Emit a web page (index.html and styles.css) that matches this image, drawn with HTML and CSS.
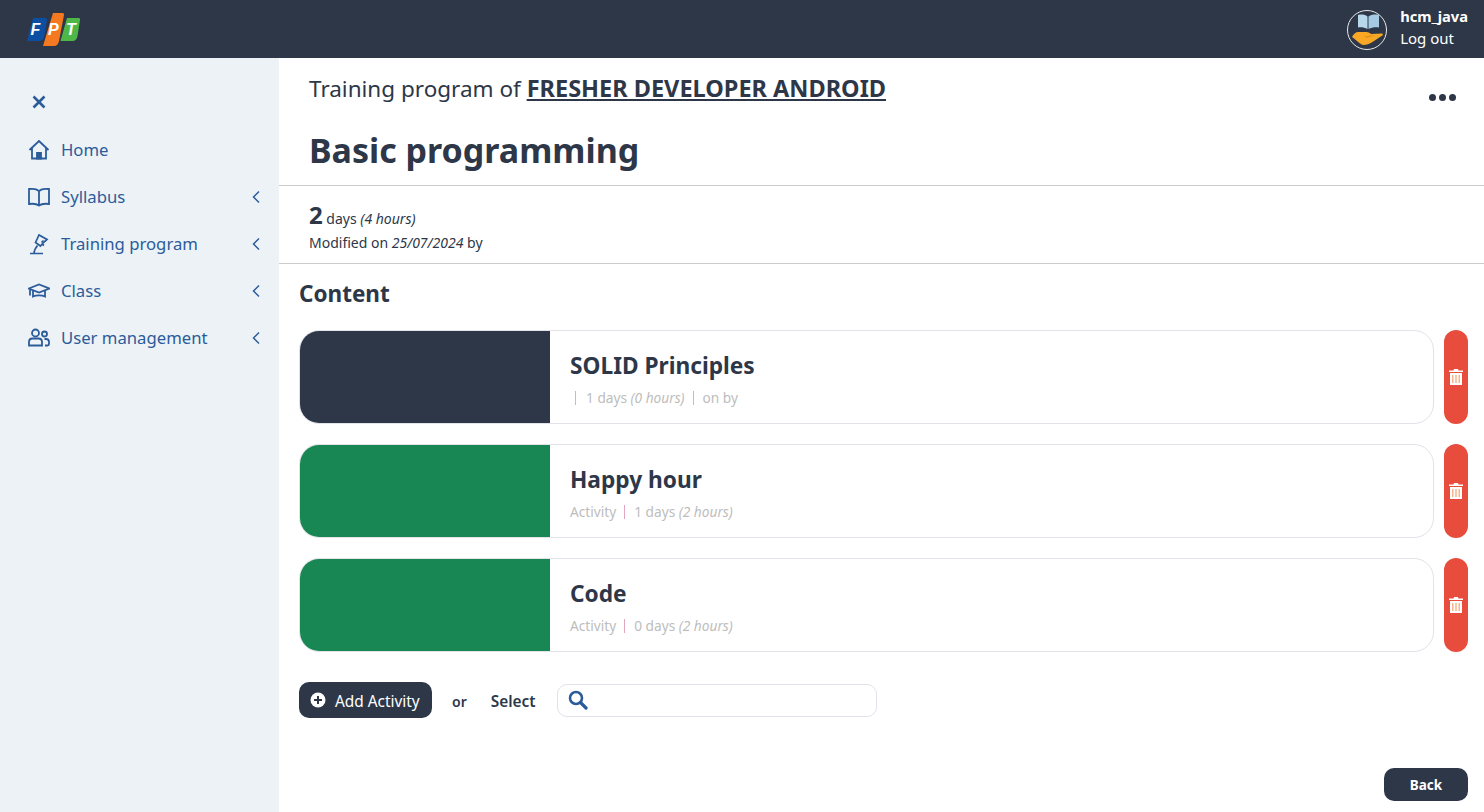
FILE: index.html
```html
<!DOCTYPE html>
<html lang="en">
  <head>
    <meta charset="UTF-8" />
    <title>Basic programming</title>
    <link rel="stylesheet" href="styles.css">
  </head>
  <body>
    <header class="topbar">
      <svg class="logo" width="53" height="33" viewBox="0 0 53 33">
        <path d="M6 5h12.500q2 0 1.500 2l-2.800 16q-.8 5-5 5H0z" fill="#0b4ea2"/>
        <path d="M26 0h9.500q2 0 1.500 2l-5 26q-1 5-5 5H16z" fill="#f47920"/>
        <path d="M40 5h11.500q2 0 1.500 2l-2.500 16q-.8 5-5 5H33.500z" fill="#4db848"/>
        <text class="logo-letter" x="3.500" y="22">F</text>
        <text class="logo-letter" x="21" y="22">P</text>
        <text class="logo-letter" x="39" y="22">T</text>
      </svg>
      <div class="user">
        <svg class="avatar" width="40" height="40" viewBox="0 0 40 40">
          <circle cx="20" cy="20" r="19.500" fill="#2d3748" stroke="#e8e8e8"/>
          <path d="M11 5c3.500-1 7-.5 9.500 1.500V19c-3-1.500-6-2-9.500-1.500z" fill="#b7d7ea"/>
          <path d="M21.500 6.500c3-2 6.500-2.500 10.500-1.500v12.500c-4-.5-7.500 0-10.500 1.500z" fill="#a5cbe3"/>
          <path d="M5 27c1.500-3 3.500-5 6.500-5h8c2 0 3.500 1.500 5 2l10-.5c2 0 1.500 2 0 2.500l-9 6c-3 2-6 3-9 3-3.500-.5-7-5-11.500-8z" fill="#f9a825"/>
          <path d="M17 26.500l7-1 4 .3-8 2z" fill="#dd8f14"/>
        </svg>
        <div class="user-text">
          <b>hcm_java</b>
          <span>Log out</span>
        </div>
      </div>
    </header>

    <div class="layout">
      <nav class="sidebar">
        <svg class="close-icon" width="16" height="16" viewBox="0 0 16 16">
          <path d="M2.500 2.500l11 11M13.500 2.500l-11 11" stroke="#2b5c9a" stroke-width="2.600" fill="none"/>
        </svg>
        <ul class="menu">
          <li>
            <svg width="22" height="22" viewBox="0 0 22 22" fill="none" stroke="#2b5c9a" stroke-width="1.800">
              <path d="M1.500 11L11 2l9.500 9M4 9v10.500h14V9"/><path d="M9 19.500V14h4v5.500z" fill="#2b5c9a"/>
            </svg>
            <span>Home</span>
          </li>
          <li>
            <svg width="22" height="22" viewBox="0 0 22 22" fill="none" stroke="#2b5c9a" stroke-width="1.800">
              <path d="M11 5C9 3 5 2.500 1 3v15c4-.5 8 0 10 1.500 2-1.500 6-2 10-1.500V3c-4-.5-8 0-10 2zM11 5v14.500"/>
            </svg>
            <span>Syllabus</span>
            <svg class="chev" width="10" height="14" viewBox="0 0 10 14"><path d="M8 1.500L2.500 7 8 12.500" fill="none" stroke="#2b5c9a" stroke-width="1.500"/></svg>
          </li>
          <li>
            <svg width="22" height="22" viewBox="0 0 22 22" fill="none" stroke="#2b5c9a" stroke-width="1.700">
              <path d="M2 20.500h13M6 20.500c0-3 1-5 3.500-8"/><path d="M7.500 9.500L11 2l8 4.500-3.500 3-3 3.500z"/><path d="M14 11l2 1.500M15.500 7.500l-2 2"/>
            </svg>
            <span>Training program</span>
            <svg class="chev" width="10" height="14" viewBox="0 0 10 14"><path d="M8 1.500L2.500 7 8 12.500" fill="none" stroke="#2b5c9a" stroke-width="1.500"/></svg>
          </li>
          <li>
            <svg width="22" height="22" viewBox="0 0 22 22" fill="none" stroke="#2b5c9a" stroke-width="1.800">
              <path d="M.800 8.500L11 4.500l10.200 4L11 12.500z"/><path d="M5 11v5.500c3-1.500 9-1.500 12 0V11M2 9.500v6"/>
            </svg>
            <span>Class</span>
            <svg class="chev" width="10" height="14" viewBox="0 0 10 14"><path d="M8 1.500L2.500 7 8 12.500" fill="none" stroke="#2b5c9a" stroke-width="1.500"/></svg>
          </li>
          <li>
            <svg width="22" height="22" viewBox="0 0 22 22" fill="none" stroke="#2b5c9a" stroke-width="1.800">
              <circle cx="7.500" cy="6" r="3.500"/><circle cx="16.500" cy="7" r="2.500"/>
              <path d="M1 18.500V15q0-3.500 3.500-3.500h6q3.500 0 3.500 3.500v3.500zM16.500 12h1.500q3 0 3 3v2q0 1.500-1.500 1.500H17"/>
            </svg>
            <span>User management</span>
            <svg class="chev" width="10" height="14" viewBox="0 0 10 14"><path d="M8 1.500L2.500 7 8 12.500" fill="none" stroke="#2b5c9a" stroke-width="1.500"/></svg>
          </li>
        </ul>
      </nav>

      <main class="main">
        <section class="title-block">
          <div class="program-line">
            <p>Training program of <a href="#">FRESHER DEVELOPER ANDROID</a></p>
            <div class="dots"><i></i><i></i><i></i></div>
          </div>
          <h1>Basic programming</h1>
        </section>

        <section class="meta">
          <p class="duration"><b>2</b> days <em>(4 hours)</em></p>
          <p class="modified">Modified on <em>25/07/2024</em> by</p>
        </section>

        <section class="content">
          <h2>Content</h2>

          <div class="row">
            <div class="card">
              <div class="swatch swatch-dark"></div>
              <div class="card-body">
                <h3>SOLID Principles</h3>
                <p><span class="bar bar-lead bar-green"></span>1 days <em>(0 hours)</em><span class="bar"></span>on by</p>
              </div>
            </div>
            <button class="trash">
              <svg width="14" height="16" viewBox="0 0 14 16"><path d="M0 1.500h4.500L5 0h4l.5 1.500H14V3H0zM1 4h12v12H1z" fill="#fff"/><path d="M3 6h1.500v8H3zM6.250 6h1.500v8h-1.500zM9.500 6H11v8H9.500z" fill="#f6b48f"/></svg>
            </button>
          </div>

          <div class="row">
            <div class="card">
              <div class="swatch swatch-green"></div>
              <div class="card-body">
                <h3>Happy hour</h3>
                <p>Activity<span class="bar bar-pink"></span>1 days <em>(2 hours)</em></p>
              </div>
            </div>
            <button class="trash">
              <svg width="14" height="16" viewBox="0 0 14 16"><path d="M0 1.500h4.500L5 0h4l.5 1.500H14V3H0zM1 4h12v12H1z" fill="#fff"/><path d="M3 6h1.500v8H3zM6.250 6h1.500v8h-1.500zM9.500 6H11v8H9.500z" fill="#f6b48f"/></svg>
            </button>
          </div>

          <div class="row">
            <div class="card">
              <div class="swatch swatch-green"></div>
              <div class="card-body">
                <h3>Code</h3>
                <p>Activity<span class="bar bar-pink"></span>0 days <em>(2 hours)</em></p>
              </div>
            </div>
            <button class="trash">
              <svg width="14" height="16" viewBox="0 0 14 16"><path d="M0 1.500h4.500L5 0h4l.5 1.500H14V3H0zM1 4h12v12H1z" fill="#fff"/><path d="M3 6h1.500v8H3zM6.250 6h1.500v8h-1.500zM9.500 6H11v8H9.500z" fill="#f6b48f"/></svg>
            </button>
          </div>

          <div class="add-row">
            <button class="btn-add">
              <svg width="16" height="16" viewBox="0 0 16 16"><circle cx="8" cy="8" r="7.500" fill="#fff"/><path d="M8 4v8M4 8h8" stroke="#2d3748" stroke-width="2"/></svg>
              <span class="btn-label">Add Activity</span>
            </button>
            <span class="or">or</span>
            <span class="select-label">Select</span>
            <div class="search">
              <svg width="20" height="20" viewBox="0 0 20 20" fill="none" stroke="#2b5c9a"><circle cx="8" cy="8" r="6" stroke-width="2.600"/><path d="M12.500 12.500L18 18" stroke-width="3.200" stroke-linecap="round"/></svg>
              <input type="text" />
            </div>
          </div>
        </section>

        <div class="footer">
          <button class="btn-back">Back</button>
        </div>
      </main>
    </div>
  </body>
</html>
```

FILE: styles.css
```css
* {
  box-sizing: border-box;
}

html,
body {
  height: 100%;
}

body {
  margin: 0;
  font-family: "Noto Sans", "Open Sans", sans-serif;
  color: #2d3748;
  background: #fff;
  overflow: hidden;
}

p,
h1,
h2,
h3,
ul {
  margin: 0;
  padding: 0;
}

button {
  font-family: inherit;
  border: none;
  cursor: pointer;
}

.topbar {
  height: 58px;
  background: #2d3748;
  display: flex;
  align-items: center;
  justify-content: space-between;
  padding: 0 16px 0 27px;
}

.logo-letter {
  font-family: "Liberation Sans", sans-serif;
  font-size: 16px;
  font-weight: bold;
  font-style: italic;
  fill: #fff;
}

.user {
  display: flex;
  align-items: center;
  gap: 13px;
  color: #fff;
}

.avatar {
  margin-top: 2px;
}

.user-text {
  display: flex;
  flex-direction: column;
  font-size: 15px;
  line-height: 22px;
  margin-top: -5px;
}

.user-text b {
  font-size: 14.700px;
}

.layout {
  display: flex;
  height: calc(100vh - 58px);
}

.sidebar {
  width: 279px;
  flex-shrink: 0;
  background: #edf2f7;
  padding: 36px 18px 0 28px;
  color: #2b5c9a;
}

.close-icon {
  display: block;
  margin: 0 0 16px 3px;
}

.menu {
  list-style: none;
}

.menu li {
  display: flex;
  align-items: center;
  gap: 11px;
  height: 47px;
  font-size: 16.700px;
}

.menu li span {
  flex: 1;
}

.main {
  flex: 1;
  min-width: 0;
  display: flex;
  flex-direction: column;
}

.title-block {
  padding: 14px 28px 11px 30px;
  border-bottom: 1px solid #cbcbcb;
}

.program-line {
  display: flex;
  justify-content: space-between;
  align-items: flex-start;
  font-size: 22.500px;
  line-height: 32px;
}

.program-line a {
  color: #2d3748;
  font-size: 23.500px;
  font-weight: 700;
}

.dots {
  display: flex;
  gap: 3px;
  margin: 22px 0 0;
}

.dots i {
  width: 7px;
  height: 7px;
  border-radius: 50%;
  background: #2d3748;
}

h1 {
  font-size: 34px;
  line-height: 48px;
  font-weight: 700;
  margin-top: 21px;
}

.meta {
  padding: 13px 30px 11px;
  border-bottom: 1px solid #cbcbcb;
  font-size: 14px;
}

.duration b {
  font-size: 24px;
  line-height: 32px;
}

.modified {
  line-height: 18px;
  margin-top: 3px;
}

.content {
  padding: 13px 16px 0 20px;
}

h2 {
  font-size: 22.500px;
  line-height: 34px;
  font-weight: 700;
  margin-bottom: 19px;
}

.row {
  display: flex;
  gap: 10px;
  height: 94px;
  margin-bottom: 20px;
}

.card {
  flex: 1;
  display: flex;
  border: 1px solid #e2e2e8;
  border-radius: 20px;
  overflow: hidden;
}

.swatch {
  width: 250px;
}

.swatch-dark {
  background: #2d3748;
}

.swatch-green {
  background: #198754;
}

.card-body {
  padding: 16px 20px;
}

h3 {
  font-size: 22.700px;
  line-height: 38px;
  font-weight: 700;
}

.card-body p {
  font-size: 13.700px;
  line-height: 20px;
  color: #bdbdbd;
  margin-top: 3px;
}

.bar {
  display: inline-block;
  width: 1px;
  height: 14px;
  margin: 0 9px 0 8px;
  vertical-align: -2px;
  background: #bdbdbd;
}

.bar-lead {
  margin: 0 10px 0 5px;
}

.bar-green {
  background: #a9cfa9;
}

.bar-pink {
  background: #e0a8c0;
}

.trash {
  width: 24px;
  border-radius: 12px;
  background: #e74c3c;
  display: flex;
  align-items: center;
  justify-content: center;
  padding: 0;
}

.add-row {
  display: flex;
  align-items: center;
  margin-top: 30px;
  font-size: 14px;
  font-weight: 600;
}

.btn-add {
  height: 36px;
  width: 133px;
  border-radius: 10px;
  background: #2d3748;
  color: #fff;
  font-size: 15.400px;
  display: flex;
  align-items: center;
  gap: 9px;
  padding: 0 0 0 11px;
}

.btn-label {
  margin-top: 2px;
}

.or {
  margin: 2px 0 0 20px;
}

.select-label {
  margin: 2px 0 0 24px;
  font-size: 15.400px;
}

.search {
  width: 320px;
  height: 33px;
  margin-left: 21px;
  border: 1px solid #e2e2ea;
  border-radius: 10px;
  display: flex;
  align-items: center;
  padding-left: 10px;
}

.search input {
  flex: 1;
  min-width: 0;
  border: none;
  outline: none;
  background: transparent;
}

.footer {
  margin-top: auto;
  display: flex;
  justify-content: flex-end;
  padding: 0 16px 11px;
}

.btn-back {
  width: 84px;
  height: 33px;
  border-radius: 10px;
  background: #2d3748;
  color: #fff;
  font-size: 13.500px;
  font-weight: 700;
}
```
